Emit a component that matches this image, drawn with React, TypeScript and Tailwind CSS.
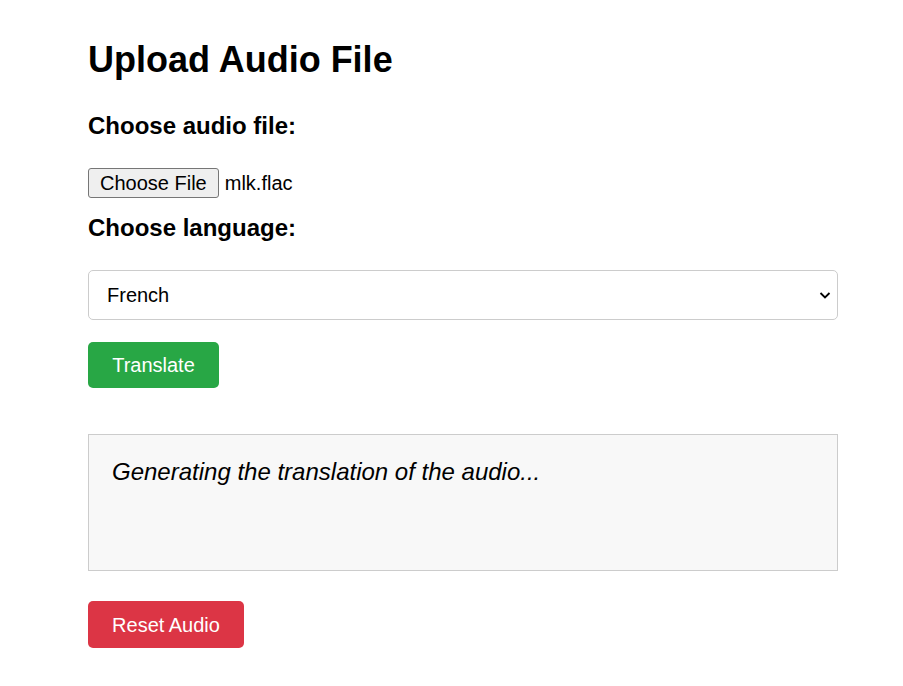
export default function App() {
    return (
        <div className="min-h-screen bg-white text-black" style={{ fontFamily: '"Liberation Sans", Arial, sans-serif' }}>
            <div className="w-[750px] ml-[88px] pt-[38px]">
                <h1 className="text-[36px] leading-[44px] font-bold">Upload Audio File</h1>

                <label className="block mt-[30px] text-[24px] leading-[28px] font-bold">Choose audio file:</label>
                <div className="mt-[28px] flex items-center h-[30px]">
                    <button className="h-[30px] px-[11px] text-[20px] leading-none bg-[#efefef] border border-[#767676] rounded-[3px]">
                        Choose File
                    </button>
                    <span className="ml-[6px] text-[20px]">mlk.flac</span>
                </div>

                <label className="block mt-[16px] text-[24px] leading-[28px] font-bold">Choose language:</label>
                <div className="mt-[28px]">
                    <div className="h-[50px] flex items-center justify-between pl-[18px] pr-[5px] border border-[#cccccc] rounded-[5px] text-[20px]">
                        <span>French</span>
                        <svg width="14" height="14" viewBox="0 0 14 14" fill="none" stroke="#000" strokeWidth="1.8">
                            <path d="M2.5 5l4.5 4.5L11.5 5" />
                        </svg>
                    </div>
                </div>

                <button className="mt-[22px] h-[46px] w-[131px] rounded-[5px] bg-[#28a745] text-white text-[20px]">
                    Translate
                </button>

                <div className="mt-[46px] h-[137px] border border-[#cccccc] bg-[#f8f8f8] px-[23px] pt-[22px]">
                    <p className="italic text-[24px] leading-[30px]">Generating the translation of the audio...</p>
                </div>

                <button className="mt-[30px] h-[47px] w-[156px] rounded-[5px] bg-[#dc3545] text-white text-[20px]">
                    Reset Audio
                </button>
            </div>
        </div>
    );
}
